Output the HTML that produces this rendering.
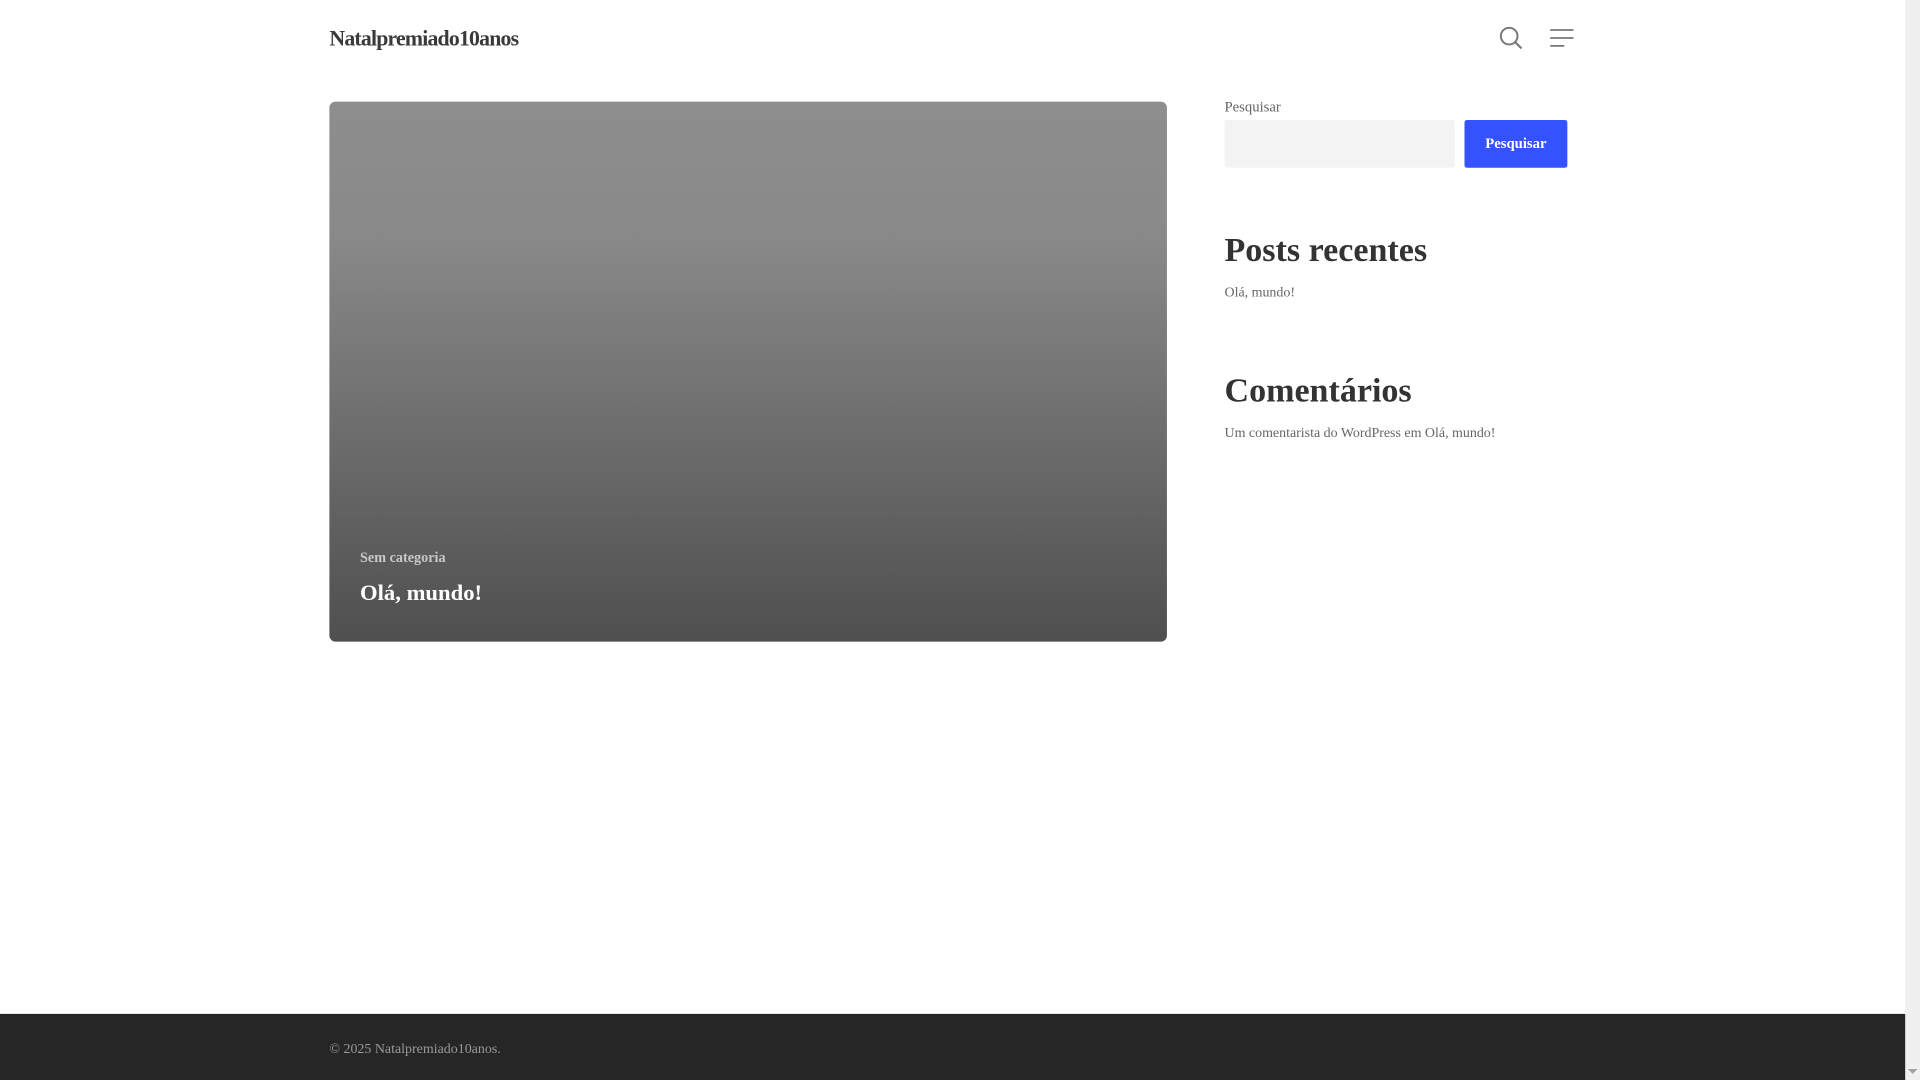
<!DOCTYPE html>
<html><head><meta charset="utf-8"><style>
html,body{margin:0;padding:0;width:1920px;height:1080px;overflow:hidden;background:#fff}
#s{position:absolute;left:0;top:0;width:1568px;height:882px;transform:scale(1.22449);transform-origin:0 0;font-family:"Liberation Serif",serif}
.a{position:absolute;white-space:nowrap}
</style></head><body><div id="s">
<div class="a" style="left:269px;top:21px;font-size:17.8px;font-weight:bold;color:#3a3a3a;letter-spacing:-0.65px">Natalpremiado10anos</div>
<svg class="a" style="left:1224px;top:21px" width="20" height="20" viewBox="0 0 20 20"><circle cx="8.5" cy="8.5" r="6.8" fill="none" stroke="#777" stroke-width="1.6"/><line x1="13.5" y1="13.5" x2="18.5" y2="18.5" stroke="#777" stroke-width="1.8"/></svg>
<svg class="a" style="left:1265px;top:23px" width="21" height="16" viewBox="0 0 21 16"><g stroke="#777" stroke-width="1.4"><line x1="1" y1="1.5" x2="20" y2="1.5"/><line x1="1" y1="8" x2="20" y2="8"/><line x1="1" y1="14.5" x2="12.5" y2="14.5"/></g></svg>
<div class="a" style="left:269px;top:83px;width:684px;height:441px;border-radius:5px;background:linear-gradient(#8e8e8e 0%,#898989 25%,#727272 55%,#4f4f4f 100%)"></div>
<div class="a" style="left:294px;top:449px;font-size:11.6px;font-weight:bold;color:#c8c8c8">Sem categoria</div>
<div class="a" style="left:294px;top:475px;font-size:18.5px;font-weight:bold;color:#fff">Olá, mundo!</div>
<div class="a" style="left:1000px;top:80px;font-size:12px;color:#666">Pesquisar</div>
<div class="a" style="left:1000px;top:98px;width:188px;height:39px;background:#f3f3f3;border-radius:2px"></div>
<div class="a" style="left:1196px;top:98px;width:84px;height:39px;background:#3452ff;border-radius:2px;color:#fff;font-size:12px;font-weight:bold;text-align:center;line-height:39px">Pesquisar</div>
<div class="a" style="left:1000px;top:189px;font-size:27.8px;font-weight:bold;color:#333">Posts recentes</div>
<div class="a" style="left:1000px;top:233px;font-size:11.4px;color:#666">Olá, mundo!</div>
<div class="a" style="left:1000px;top:304px;font-size:27.8px;font-weight:bold;color:#333">Comentários</div>
<div class="a" style="left:1000px;top:348px;font-size:11.4px;color:#666">Um comentarista do WordPress em Olá, mundo!</div>
<div class="a" style="left:0;top:828px;width:1556px;height:54px;background:#262626"></div>
<div class="a" style="left:269px;top:851px;font-size:11.4px;color:#999">© 2025 Natalpremiado10anos.</div>
<div class="a" style="left:1556px;top:0;width:12px;height:882px;background:#f0f0f0"></div>
<svg class="a" style="left:1558px;top:872px" width="8" height="6"><path d="M0 1h8L4 5z" fill="#a3a3a3"/></svg>
</div></body></html>
